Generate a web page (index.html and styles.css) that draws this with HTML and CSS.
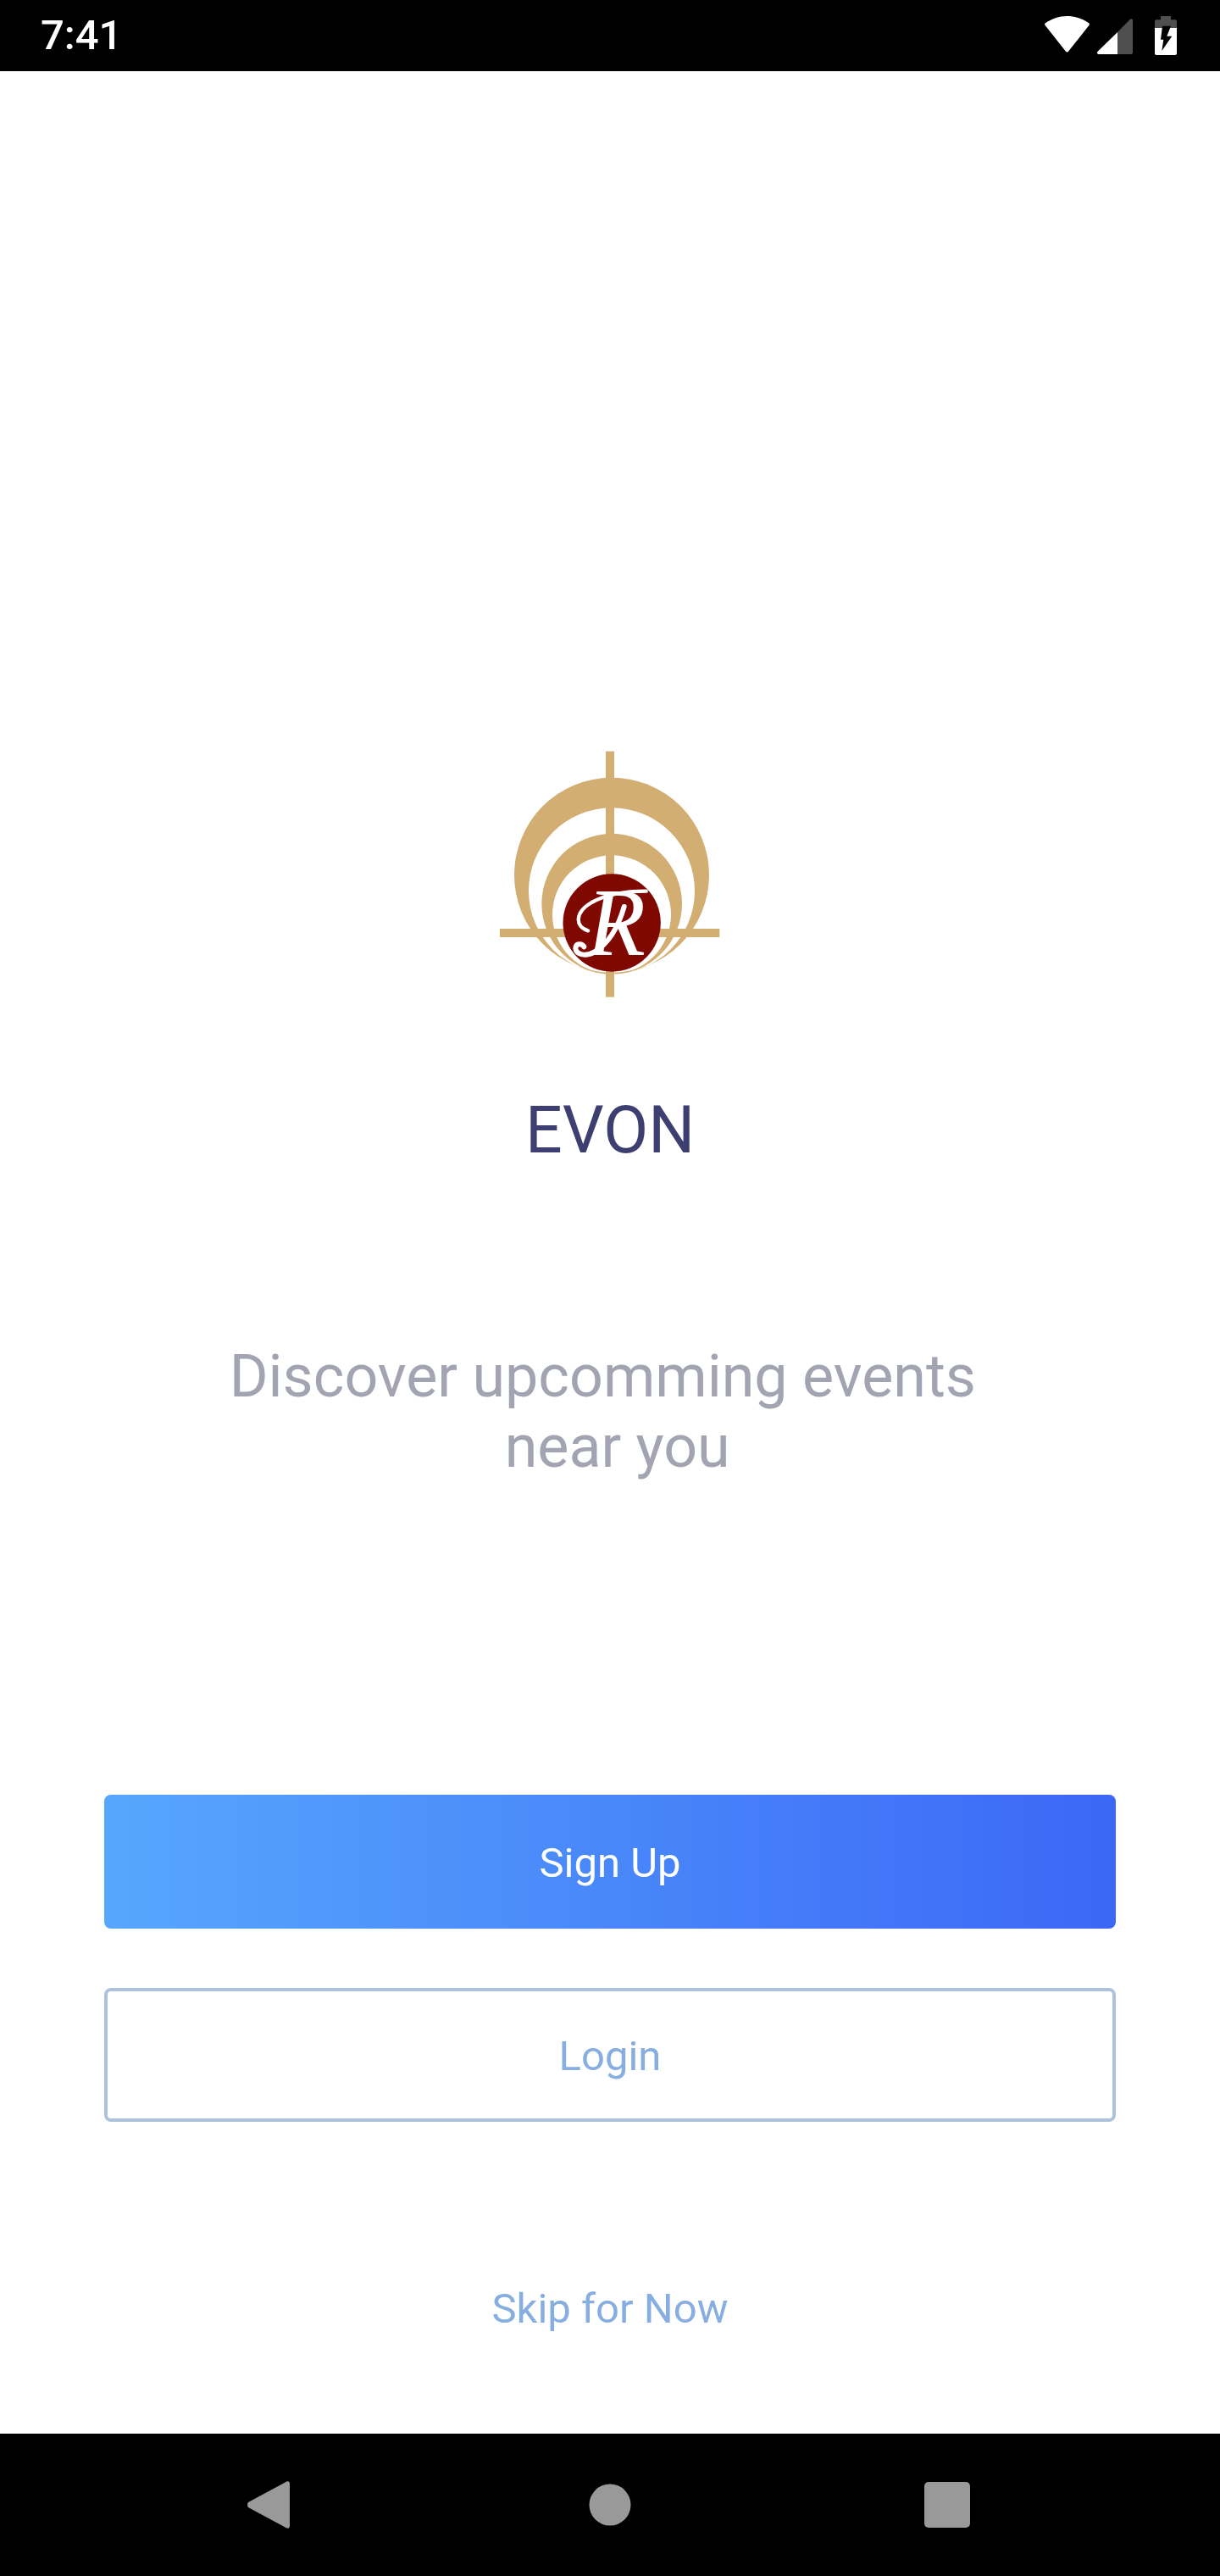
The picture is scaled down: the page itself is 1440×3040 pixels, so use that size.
FILE: index.html
```html
<!DOCTYPE html>
<html lang="en">
<head>
<meta charset="utf-8">
<title>EVON</title>
<link rel="stylesheet" href="styles.css">
</head>
<body>
<div class="screen">
  <header class="status">
    <span class="clock">7:41</span>
    <div class="status-icons">
      <svg class="ic-wifi" viewBox="0 0 53 43" width="53" height="43"><path fill="#fff" d="M.8 8.300C8 3.300 17 0 26.500 0S45 3.300 52.200 8.300c.8.6.9 1.600.3 2.400L28 41.800c-.8 1-2.200 1-3 0L.5 10.700c-.6-.8-.5-1.800.3-2.400z"/></svg>
      <svg class="ic-signal" viewBox="0 0 42 42" width="42" height="42"><path fill="#4f4f4f" d="M24 16L39 .8C40.200-.4 42 .4 42 2v38c0 1.200-.8 2-2 2H24z"/><path fill="#fff" d="M24 16v26H2c-1.800 0-2.600-2-1.400-3.200z"/></svg>
      <svg class="ic-batt" viewBox="0 0 26 46" width="26" height="46"><path fill="#4f4f4f" d="M7 0h12v4.300h5c1.200 0 2 .8 2 2v7.700H0V6.300c0-1.200.8-2 2-2h5z"/><path fill="#fff" d="M0 14h26v30c0 1.200-.8 2-2 2H2c-1.200 0-2-.8-2-2z"/><path fill="#000" d="M9 11.700h10l-4.700 12h6L8.300 41l2-13.300H7z"/></svg>
    </div>
  </header>
  <main class="content">
    <svg class="logo" viewBox="0 0 900 960" width="300" height="320" role="img" aria-label="EVON logo">
      <g fill="#d3ae72">
        <rect x="435" y="50" width="30" height="870"/>
        <path fill-rule="evenodd" d="M111 488a345 345 0 1 0 690 0a345 345 0 1 0-690 0zM162 544a294 294 0 1 0 588 0a294 294 0 1 0-588 0z"/>
        <path fill-rule="evenodd" d="M208 590a248.500 248.500 0 1 0 497 0a248.500 248.500 0 1 0-497 0zM246 628a210 210 0 1 0 420 0a210 210 0 1 0-420 0z"/>
        <rect x="60" y="678" width="778" height="30"/>
      </g>
      <circle cx="456.500" cy="657" r="173" fill="#7f0800"/>
      <path class="swash" d="M372 685C325 670 325 620 385 585C440 555 510 545 578 545"/>
      <path class="swash swash-tail" d="M500 600C480 670 445 730 395 760C365 778 330 770 328 748C328 730 350 728 358 742"/>
      <text class="logo-r" x="472" y="772">R</text>
    </svg>
    <h1 class="brand">EVON</h1>
    <p class="tagline"><span>Discover upcomming events </span><span> near you</span></p>
    <div class="actions">
      <a class="btn btn-primary">Sign Up</a>
      <a class="btn btn-outline">Login</a>
    </div>
    <a class="skip">Skip for Now</a>
  </main>
  <footer class="nav">
    <svg viewBox="0 0 50 56" width="50" height="56"><path fill="#999" d="M1 25L46 .8C48 -.3 50 .8 50 3v50c0 2.200-2 3.300-4 2.200L1 31c-1.300-1.500-1.300-4.500 0-6z"/></svg>
    <svg viewBox="0 0 50 50" width="50" height="50"><circle cx="25" cy="25" r="24.500" fill="#999"/></svg>
    <svg viewBox="0 0 54 54" width="54" height="54"><rect width="54" height="54" rx="5" fill="#999"/></svg>
  </footer>
</div>
</body>
</html>
```
FILE: styles.css
```css
* { box-sizing: border-box; }
html, body { margin: 0; padding: 0; background: #fff; }
body { font-family: Roboto, "Liberation Sans", sans-serif; }
.screen { width: 1440px; height: 3040px; display: flex; flex-direction: column; }

.status { height: 84px; background: #000; display: flex; align-items: center; justify-content: space-between; padding: 0 51px 0 48px; flex: none; }
.clock { color: #fff; font-size: 49px; font-weight: 500; line-height: 84px; }
.status-icons { display: flex; align-items: flex-start; height: 84px; padding-top: 19px; }
.ic-signal { margin: 3px 26px 0 9px; }

.content { flex: 1; display: flex; flex-direction: column; align-items: center; padding-top: 786px; }
.logo { display: block; flex: none; }
.swash { fill: none; stroke: #fff; stroke-width: 13; stroke-linecap: round; }
.swash-tail { stroke-width: 18; }
.logo-r { fill: #fff; font-family: "Liberation Serif", serif; font-style: italic; font-size: 340px; text-anchor: middle; }

.brand { margin: 101px 0 0; font-size: 77px; line-height: 86px; font-weight: 400; color: #3d3f70; }
.tagline { margin: 206px 0 0; font-size: 70px; line-height: 83px; color: #a2a5b1; text-align: center; }
.tagline span { display: block; white-space: pre; }

.actions { margin-top: 369px; width: 1194px; display: flex; flex-direction: column; gap: 70px; }
.btn { height: 158px; border-radius: 8px; display: flex; align-items: center; justify-content: center; font-size: 49px; }
.btn-primary { background: linear-gradient(90deg, #56a7fd, #3c67f6); color: #fff; padding-top: 2px; }
.btn-outline { border: 4px solid #aec1dd; color: #86aee0; padding-top: 3px; }
.skip { margin-top: 192px; font-size: 49px; line-height: 58px; color: #86aee0; }

.nav { height: 168px; flex: none; background: #000; display: flex; align-items: center; padding-left: 292px; }
.nav svg:nth-child(2) { margin-left: 353px; }
.nav svg:nth-child(3) { margin-left: 346px; }
```
